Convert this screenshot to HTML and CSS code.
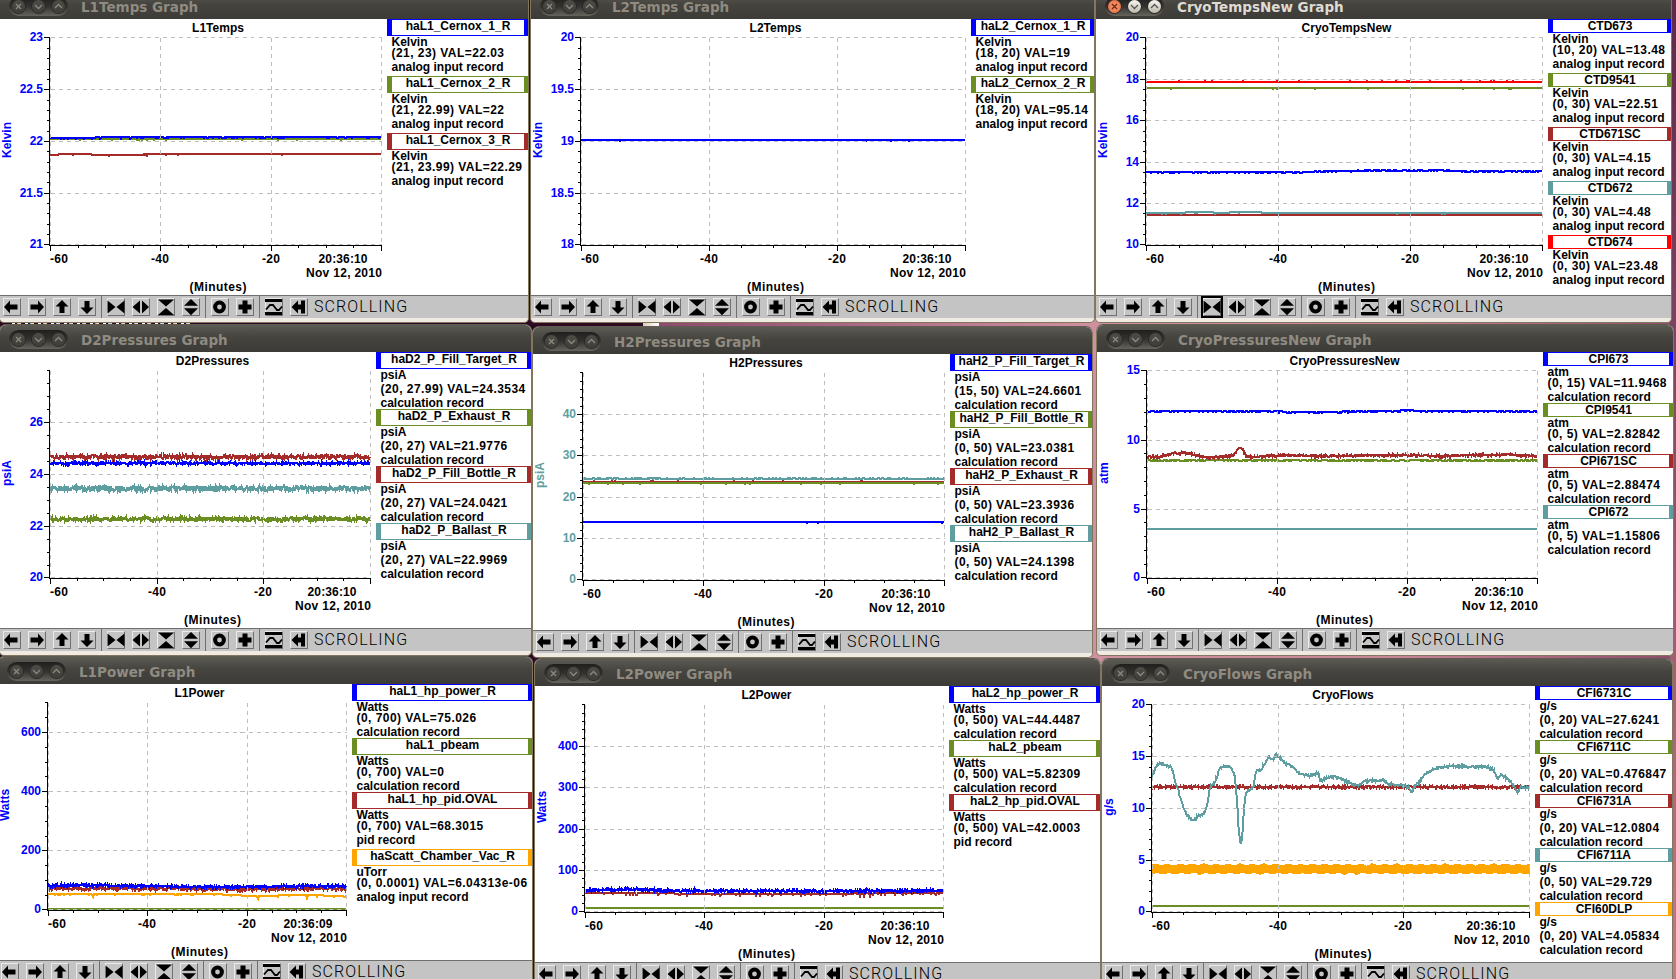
FILE: index.html
```html
<!DOCTYPE html>
<html lang="en">
<head>
  <meta charset="UTF-8" />
  <title>Strip Charts</title>
  <link rel="stylesheet" href="styles.css">
</head>
<body>

  <svg class="sprite" aria-hidden="true">
    <symbol id="left" viewBox="0 0 18 18"><path d="M1 9l6-6.5V6.5h7.5v5H7v4z"/></symbol>
    <symbol id="right" viewBox="0 0 18 18"><path d="M16 9l-6-6.5V6.5H2.5v5H10v4z"/></symbol>
    <symbol id="up" viewBox="0 0 18 18"><path d="M9 2L2.500 8.500H6.500V15h5V8.500h4z"/></symbol>
    <symbol id="down" viewBox="0 0 18 18"><path d="M9 16L2.500 9.500H6.500V3h5v6.500h4z"/></symbol>
    <symbol id="xin" viewBox="0 0 18 18"><path d="M0.500 2.500L8.500 9l-8 6.500zM17.500 2.500L9.500 9l8 6.500z"/></symbol>
    <symbol id="xout" viewBox="0 0 18 18"><path d="M8 2.500L0.500 9 8 15.500zM10 2.500L17 9l-7 6.500z"/></symbol>
    <symbol id="yin" viewBox="0 0 18 18"><path d="M1 1.500h16L9 8.500zM1 17h16L9 10z"/></symbol>
    <symbol id="yout" viewBox="0 0 18 18"><path d="M9 1L2 7.800h14zM9 17.200L2 10.200h14z"/></symbol>
    <symbol id="ring" viewBox="0 0 18 18"><circle cx="8.500" cy="9" r="4.400" fill="none" stroke="#000" stroke-width="4"/></symbol>
    <symbol id="plus" viewBox="0 0 18 18"><path d="M6.500 2.500h5V6.500h4v5h-4v4h-5v-4h-4v-5h4z"/></symbol>
    <symbol id="wave" viewBox="0 0 18 18"><path d="M0 1h17v3H0zM0 14h17v3H0z"/><path d="M1 11.500L5 7h3l4 5h2l3-3.500" fill="none" stroke="#000" stroke-width="1.800"/></symbol>
    <symbol id="reset" viewBox="0 0 18 18"><path d="M1.500 9L8 2.500V6.500h3v-4h4v13h-4v-4H8v4z"/></symbol>
  </svg>

  <main class="desktop" id="desktop">
    <div class="terminal-text"></div>
    <div class="panel-edge"></div>
  </main>

  <script src="charts.js"></script>
</body>
</html>
```
FILE: styles.css
```css
body {
  margin: 0;
  overflow: hidden;
  font-family: "Liberation Sans", Arial, sans-serif;
  font-size: 12px;
}

.sprite {
  display: none;
}

.desktop {
  position: relative;
  width: 1676px;
  height: 979px;
  overflow: hidden;
  background:
    linear-gradient(#5c2a4c, #7d4562 35%, #c27a86) 1670px 0 / 6px 100% no-repeat,
    linear-gradient(90deg, #2c0a22 643px, #8c4a6e 660px, #cf90a0 1096px, #c98596 1400px, #8e4c6c);
}

/* strips of the windows that lie behind */
.terminal-text {
  position: absolute;
  left: 12px;
  top: 323px;
  width: 180px;
  height: 2px;
  background: repeating-linear-gradient(90deg, #fff 0 3px, #2c0a22 3px 5px, #7fb4e8 5px 6px, #e8dcc0 6px 9px, #2c0a22 9px 13px);
}

.panel-edge {
  position: absolute;
  left: 643px;
  top: 323px;
  width: 16px;
  height: 4px;
  background: linear-gradient(90deg, #d8cfb8, #fff);
}

/* windows */
.window {
  position: absolute;
  box-sizing: content-box;
  border: 1px solid #82765f;
  border-top-color: #5f5b50;
  border-radius: 7px 7px 5px 5px;
  background: #efebe2;
  overflow: hidden;
  padding-bottom: 4px;
}

.l1temps { left: -1px; top: -9px; width: 528px; }
.l2temps { left: 530px; top: -9px; width: 563px; }
.cryotemps { left: 1095px; top: -9px; width: 575px; }
.d2pressures { left: -1px; top: 324px; width: 531px; }
.h2pressures { left: 532px; top: 326px; width: 559px; }
.cryopressures { left: 1096px; top: 324px; width: 576px; }
.l1power { left: -3px; top: 656px; width: 534px; }
.l2power { left: 534px; top: 658px; width: 565px; }
.cryoflows { left: 1101px; top: 658px; width: 570px; }

.titlebar {
  display: flex;
  align-items: center;
  box-sizing: border-box;
  height: 27px;
  padding-top: 2px;
  background: linear-gradient(#5b5a53, #45443f 45%, #3c3b37);
  color: #8f8b81;
  font: bold 13.5px "DejaVu Sans", sans-serif;
  line-height: 16px;
  white-space: nowrap;
}

.controls {
  display: flex;
  align-items: center;
  justify-content: space-between;
  box-sizing: border-box;
  width: 59px;
  height: 19px;
  margin: 0 13px 0 9px;
  padding: 0 3px;
  border-radius: 10px;
  background: linear-gradient(#201f1d, #343330 50%, #65645c);
}

.control {
  width: 13px;
  height: 13px;
  border-radius: 50%;
  background: linear-gradient(#4d4c47, #3e3d39);
  box-shadow: 0 0 0 1px #2b2a27;
}

.control path {
  fill: none;
  stroke: #8d897e;
  stroke-width: 1.3;
}

.active .titlebar {
  color: #dfdbd2;
}

.active .control {
  background: linear-gradient(#f7f5f0, #bdb8ad);
}

.active .control path {
  stroke: #55534c;
}

.active .close {
  background: radial-gradient(#f79a72, #e9683c);
}

.active .close path {
  stroke: #6b2a12;
}

.content {
  display: flex;
  height: 276px;
  background: #fff;
}

/* plot */
.plot {
  display: block;
  flex: none;
  font-weight: bold;
}

.grid {
  stroke: #bebebe;
  stroke-dasharray: 4 4;
}

.axis {
  stroke: #000;
}

.trace {
  fill: none;
  stroke-width: 2;
}

.grid, .axis, .trace {
  shape-rendering: crispEdges;
}

/* legend */
.legend {
  flex: none;
  color: #000;
  font-weight: bold;
  white-space: nowrap;
  overflow: hidden;
}

.legend div {
  box-sizing: border-box;
  height: 14px;
  line-height: 14px;
  padding-left: 4.5px;
}

.legend .name {
  border: solid;
  border-width: 1px 4px 1px 5px;
  padding: 0;
  height: 14px;
  line-height: 12px;
  text-align: center;
}

.legend .name span {
  color: #000;
}

.legend .name.deep {
  height: 17px;
}

.legend .units {
  height: 11px;
  line-height: 13px;
}

.legend .units.deep {
  height: 14px;
}

.legend .value {
  letter-spacing: 0.45px;
  line-height: 12px;
}

.legend .record {
  height: 12px;
  line-height: 12px;
}

.legend .record.deep {
  height: 15px;
}

/* toolbar */
.toolbar {
  display: flex;
  align-items: center;
  box-sizing: border-box;
  height: 23px;
  border-top: 1px solid #6f6f6f;
  background: #c4c4c4;
  white-space: nowrap;
}

.group {
  display: flex;
  align-items: center;
  gap: 7px;
  height: 22px;
  padding: 0 5px 0 5px;
  border-right: 1px solid #6f6f6f;
}

.group:first-child {
  padding-left: 3px;
}

.group:last-of-type {
  border-right: none;
}

.tool {
  box-sizing: border-box;
  width: 18px;
  height: 18px;
  border: 1px solid;
  border-color: #ebebeb #707070 #707070 #ebebeb;
}

.tool svg {
  display: block;
  width: 18px;
  height: 18px;
  margin: -1px;
}

.tool.focused {
  outline: 2px solid #000;
}

.status {
  margin-left: 1px;
  font-family: Roboto, "Liberation Sans", sans-serif;
  font-weight: 300;
  font-size: 16px;
  letter-spacing: 1.1px;
  line-height: 20px;
}
```
FILE: charts.js
```js
const BLUE = '#0000ff', GREEN = '#6b8e23', BROWN = '#a52a2a', TEAL = '#5f9ea0', ORANGE = '#ffa500', RED = '#ff0000';
const AI = 'analog input record', CALC = 'calculation record';

// signals: [name, units, range, value, record type, colour]
// traces: [colour, points [percent, y], noise up, noise down, how often, spikes]
const charts = [
  { id: 'l1temps', title: 'L1Temps', legend: 141, w: 528, min: 21, max: 23, major: 0.5, minor: 0.1, units: 'Kelvin', time: '20:36:10',
    signals: [
      ['haL1_Cernox_1_R', 'Kelvin', '(21, 23)', '22.03', AI, BLUE],
      ['haL1_Cernox_2_R', 'Kelvin', '(21, 22.99)', '22', AI, GREEN],
      ['haL1_Cernox_3_R', 'Kelvin', '(21, 23.99)', '22.29', AI, BROWN]],
    traces: [[GREEN, [[0, 120]], 0, 1, 0.05], [BLUE, [[0, 119], [12, 119], [14, 118.400], [50, 118]], 0, 1, 0.2], [BROWN, [[0, 136], [5, 135], [20, 136], [30, 135.400], [45, 135]], 0, 1, 0.04]] },
  { id: 'l2temps', title: 'L2Temps', legend: 123, w: 563, min: 18, max: 20, major: 0.5, minor: 0.1, units: 'Kelvin', time: '20:36:10',
    signals: [
      ['haL2_Cernox_1_R', 'Kelvin', '(18, 20)', '19', AI, BLUE],
      ['haL2_Cernox_2_R', 'Kelvin', '(18, 20)', '95.14', AI, GREEN]],
    traces: [[BLUE, [[0, 121]], 0, 1, 0.01]] },
  { id: 'cryotemps', title: 'CryoTempsNew', legend: 123, w: 575, min: 10, max: 20, major: 2, minor: 0.5, units: 'Kelvin', time: '20:36:10', active: true,
    signals: [
      ['CTD673', 'Kelvin', '(10, 20)', '13.48', AI, BLUE],
      ['CTD9541', 'Kelvin', '(0, 30)', '22.51', AI, GREEN],
      ['CTD671SC', 'Kelvin', '(0, 30)', '4.15', AI, BROWN],
      ['CTD672', 'Kelvin', '(0, 30)', '4.48', AI, TEAL],
      ['CTD674', 'Kelvin', '(0, 30)', '23.48', AI, RED]],
    traces: [
      [BLUE, [[0, 152.700], [38, 153], [50, 151.600], [60, 151.300], [75, 151.300], [84, 152.400]], 0, 0.700, 0.5],
      [GREEN, [[0, 69]], 0, 1, 0.03],
      [BROWN, [[0, 196]], 0, 0, 0],
      [TEAL, [[0, 194], [10, 194], [10.100, 193], [17, 193], [17.100, 194], [25, 193], [29, 193], [29.100, 194]], 0, 1, 0.03],
      [RED, [[0, 63]], 1, 0, 0.04]] },
  { id: 'd2pressures', title: 'D2Pressures', legend: 155, w: 531, min: 20, max: 28, major: 2, minor: 0.5, openTop: true, units: 'psiA', time: '20:36:10',
    signals: [
      ['haD2_P_Fill_Target_R', 'psiA', '(20, 27.99)', '24.3534', CALC, BLUE],
      ['haD2_P_Exhaust_R', 'psiA', '(20, 27)', '21.9776', CALC, GREEN],
      ['haD2_P_Fill_Bottle_R', 'psiA', '(20, 27)', '24.0421', CALC, BROWN],
      ['haD2_P_Ballast_R', 'psiA', '(20, 27)', '22.9969', CALC, TEAL]],
    traces: [[BLUE, [[0, 111.400]], 1, 1, 0.7], [GREEN, [[0, 167]], 2, 2, 0.9], [BROWN, [[0, 105]], 2, 2, 0.95], [TEAL, [[0, 136.500]], 2.600, 2.600, 0.95]] },
  { id: 'h2pressures', title: 'H2Pressures', legend: 142, w: 559, min: 0, max: 50, major: 10, minor: 2, openTop: true, units: 'psiA', axisColor: TEAL, time: '20:36:10',
    signals: [
      ['haH2_P_Fill_Target_R', 'psiA', '(15, 50)', '24.6601', CALC, BLUE],
      ['haH2_P_Fill_Bottle_R', 'psiA', '(0, 50)', '23.0381', CALC, GREEN],
      ['haH2_P_Exhaust_R', 'psiA', '(0, 50)', '23.3936', CALC, BROWN],
      ['haH2_P_Ballast_R', 'psiA', '(0, 50)', '24.1398', CALC, TEAL]],
    traces: [[BLUE, [[0, 168]], 0, 1, 0.02], [BROWN, [[0, 128]], 1, 0, 0.04], [GREEN, [[0, 129]], 0, 1, 0.05], [TEAL, [[0, 125]], 1, 0, 0.3]] },
  { id: 'cryopressures', title: 'CryoPressuresNew', legend: 130, w: 576, min: 0, max: 15, major: 5, minor: 1, units: 'atm', time: '20:36:10',
    signals: [
      ['CPI673', 'atm', '(0, 15)', '11.9468', CALC, BLUE],
      ['CPI9541', 'atm', '(0, 5)', '2.82842', CALC, GREEN],
      ['CPI671SC', 'atm', '(0, 5)', '2.88474', CALC, BROWN],
      ['CPI672', 'atm', '(0, 5)', '1.15806', CALC, TEAL]],
    traces: [
      [BLUE, [[0, 59], [30, 59], [40, 60], [60, 59], [66, 58.400], [80, 59]], 0, 1, 0.4],
      [GREEN, [[0, 108]], 0, 1, 0.5],
      [BROWN, [[0, 104.600], [3, 105.300], [7, 101], [10, 101], [16, 105.600], [22, 104], [23.500, 96], [24.500, 97], [25.500, 105], [32, 104], [36, 103.400], [45, 104], [70, 103], [74, 104], [94, 102.600], [100, 104.600]], 0.700, 0.700, 0.7],
      [TEAL, [[0, 177]], 0, 0, 0]] },
  { id: 'l1power', title: 'L1Power', legend: 180, w: 534, min: 0, max: 700, major: 200, minor: 50, openTop: true, units: 'Watts', time: '20:36:09',
    signals: [
      ['haL1_hp_power_R', 'Watts', '(0, 700)', '75.026', CALC, BLUE],
      ['haL1_pbeam', 'Watts', '(0, 700)', '0', CALC, GREEN],
      ['haL1_hp_pid.OVAL', 'Watts', '(0, 700)', '68.3015', 'pid record', BROWN],
      ['haScatt_Chamber_Vac_R', 'uTorr', '(0, 0.0001)', '6.04313e-06', AI, ORANGE]],
    traces: [
      [GREEN, [[0, 225]], 0, 0, 0],
      [ORANGE, [[0, 210], [57, 210], [60, 211], [70, 212], [85, 211], [100, 212]], 0, 1, 0.15, [15, 70.600, 87]],
      [BROWN, [[0, 204], [25, 204], [65, 205], [100, 204]], 1, 2, 0.6],
      [BLUE, [[0, 202], [10, 201], [50, 203], [100, 202]], 1, 1, 0.7]] },
  { id: 'l2power', title: 'L2Power', legend: 151, w: 565, min: 0, max: 500, major: 100, minor: 20, openTop: true, units: 'Watts', time: '20:36:10',
    signals: [
      ['haL2_hp_power_R', 'Watts', '(0, 500)', '44.4487', CALC, BLUE],
      ['haL2_pbeam', 'Watts', '(0, 500)', '5.82309', CALC, GREEN],
      ['haL2_hp_pid.OVAL', 'Watts', '(0, 500)', '42.0003', 'pid record', BROWN]],
    traces: [[GREEN, [[0, 222]], 0, 0, 0], [BROWN, [[0, 207], [50, 208], [100, 207]], 0, 2, 0.15], [BLUE, [[0, 204.600], [13, 203.600], [25, 205], [50, 205.400], [100, 205]], 1.500, 1, 0.6]] },
  { id: 'cryoflows', title: 'CryoFlows', legend: 137, w: 570, min: 0, max: 20, major: 5, minor: 1, units: 'g/s', time: '20:36:10',
    signals: [
      ['CFI6731C', 'g/s', '(0, 20)', '27.6241', CALC, BLUE],
      ['CFI6711C', 'g/s', '(0, 20)', '0.476847', CALC, GREEN],
      ['CFI6731A', 'g/s', '(0, 20)', '12.0804', CALC, BROWN],
      ['CFI6711A', 'g/s', '(0, 50)', '29.729', CALC, TEAL],
      ['CFI60DLP', 'g/s', '(0, 20)', '4.05834', CALC, ORANGE]],
    traces: [
      [GREEN, [[0, 220]], 0, 0, 0],
      [BROWN, [[0, 101]], 1, 1, 0.7],
      [TEAL, [[0, 90], [1.100, 81], [2.100, 77], [3.100, 79], [4.500, 80], [5.400, 83], [6.300, 98], [7, 104], [7.800, 116], [9, 127], [10, 133], [11.300, 134], [12.400, 130], [13.400, 129], [14.500, 122], [15.400, 101], [16.700, 96], [18, 83], [19, 80], [20, 81], [21, 81], [22, 91], [22.600, 117], [23, 144], [23.500, 158], [23.900, 154], [24.400, 121], [24.900, 107], [25.900, 104], [26.900, 101], [27.700, 84], [28.600, 85], [29.900, 78], [31, 71], [32, 74], [32.800, 69], [34, 72], [35.500, 77], [37, 80], [39, 87], [40.500, 89], [42, 90], [43.700, 87], [44.300, 88], [44.700, 96], [45.700, 93], [47, 92], [48.400, 90], [50, 92], [51.400, 95], [53, 98], [55, 99], [56.300, 95], [58, 94], [59.300, 95], [61.300, 94], [62.800, 98], [65, 99], [66.800, 99], [68, 101], [69, 107], [69.500, 100], [70.700, 97], [72.200, 89], [73.700, 85], [75.700, 82], [77.700, 81], [81, 80], [83.600, 81], [86.600, 81], [89, 81], [90.800, 85], [91.600, 93], [92.600, 88], [94.500, 93], [96, 100], [97, 108], [97.700, 101], [100, 102]], 1, 1, 0.6],
      [ORANGE, [[0, 183]], 5, 5, 1]] }
];

// small repeatable generator so the noise looks the same on every load
let seed = 20361;
function random() {
  seed = (seed * 16807) % 2147483647;
  return seed / 2147483647;
}

function valueAt(points, p) {
  for (let i = 1; i < points.length; i++) {
    if (p <= points[i][0]) {
      const [x0, y0] = points[i - 1], [x1, y1] = points[i];
      return y0 + (y1 - y0) * (p - x0) / (x1 - x0);
    }
  }
  return points[points.length - 1][1];
}

function tracePath(trace, x0, x1) {
  const [, points, up, down, rate, spikes] = trace;
  const step = rate >= 0.6 ? 0.5 : 1;
  const flat = [];
  for (let x = x0; x <= x1; x += step) {
    const p = (x - x0) / (x1 - x0) * 100;
    let y = valueAt(points, p);
    if (rate === 1) {
      // sensor flips between both rails at each sample, the rails beat slowly
      const side = flat.length % 2 ? 1 : -1;
      y += side * (4.1 + Math.sin(x * 0.52 + side) * 0.8 + random() * 0.7);
    } else if (random() < rate) {
      y += random() < up / (up + down) ? -random() * up - 0.3 : random() * down + 0.3;
    }
    if (spikes && spikes.some(s => Math.abs(s - p) < 0.2)) y += 3;
    flat.push(x + ',' + Math.round(y));
  }
  return 'M' + flat.join('L');
}

function line(x1, y1, x2, y2) {
  return `M${x1} ${y1}L${x2} ${y2}`;
}

function text(x, y, str, anchor, width, color) {
  const fit = width ? ` textLength="${width}"` : '';
  return `<text x="${x}" y="${y}" text-anchor="${anchor}"${fit} fill="${color || '#000'}">${str}</text>`;
}

function plot(c) {
  const w = c.w - c.legend;
  const x0 = 50.5, x1 = w - 5.5, top = 18.5, bottom = 225.5;
  const color = c.axisColor || BLUE;
  const yOf = v => Math.round(bottom - (v - c.min) / (c.max - c.min) * (bottom - top)) + 0.5 - (v === c.min ? 1 : 0);
  const xOf = m => Math.round(x0 + m / 60 * (x1 - x0) - 0.5) + 0.5;
  let grid = '', axis = line(49.5, 18, 49.5, 227) + line(49, 226.5, w - 5, 226.5), labels = '';

  const steps = Math.round((c.max - c.min) / c.minor);
  const perMajor = Math.round(c.major / c.minor);
  for (let i = 0; i <= steps; i++) {
    const v = c.min + i * c.minor, y = yOf(v) - (i === steps ? 1 : 0);
    if (i % perMajor === 0 && !(c.openTop && i === steps)) {
      grid += line(x0, y, x1, y);
      axis += line(44, y, 49, y);
      labels += text(43, y + 3.5, +v.toFixed(1), 'end', 0, color);
    } else {
      axis += line(47, y, 49, y);
    }
  }
  for (let m = 0; m <= 60; m += 5) {
    const x = xOf(m);
    axis += line(x, 227, x, m % 20 ? 229 : 232);
    if (m % 20 === 0) grid += line(x, top, x, 226);
  }

  const mid = (x0 + x1) / 2 + 2;
  labels += text(mid, 13, c.title, 'middle');
  labels += text(x0 - 0.5, 244, '-60', 'start', 18);
  labels += text(xOf(20) - 0.5, 244, '-40', 'middle', 18);
  labels += text(xOf(40) - 0.5, 244, '-20', 'middle', 18);
  labels += text(x1 - 14, 244, c.time, 'end', 49);
  labels += text(x1 + 0.5, 258, 'Nov 12, 2010', 'end', 76);
  labels += text(mid, 272, '(Minutes)', 'middle', 57);
  labels += `<text transform="translate(11 121) rotate(-90)" text-anchor="middle" fill="${color}">${c.units}</text>`;

  const traces = c.traces.map(t => `<path class="trace" stroke="${t[0]}" d="${tracePath(t, 50, w - 6)}"/>`).join('');
  return `<svg class="plot" width="${w}" height="276">${traces}<path class="grid" d="${grid}"/><path class="axis" d="${axis}"/>${labels}</svg>`;
}

// lines with descenders take more room in the legend
function deep(str) {
  return /[gpy_]/.test(str) ? ' deep' : '';
}

function legend(c) {
  const rows = c.signals.map(([name, units, range, value, record, color]) => `
    <div class="name${deep(name)}" style="border-color:${color}"><span>${name}</span></div>
    <div class="units${deep(units)}">${units}</div>
    <div class="value">${range} VAL=${value}</div>
    <div class="record${deep(record)}">${record}</div>`).join('');
  return `<div class="legend" style="width:${c.legend}px">${rows}</div>`;
}

function toolbar(c) {
  const groups = [['left', 'right', 'up', 'down'], ['xin', 'xout', 'yin', 'yout'], ['ring', 'plus'], ['wave', 'reset']];
  return groups.map(g => '<div class="group">' + g.map(name =>
    `<div class="tool${c.active && name === 'xin' ? ' focused' : ''}"><svg><use href="#${name}"/></svg></div>`).join('') + '</div>').join('') +
    '<span class="status">SCROLLING</span>';
}

function control(cls, d) {
  return `<svg class="control ${cls}" viewBox="0 0 13 13"><path d="${d}"/></svg>`;
}

const desktop = document.getElementById('desktop');
charts.forEach(c => {
  const el = document.createElement('section');
  el.className = 'window ' + c.id + (c.active ? ' active' : '');
  el.innerHTML = `
    <div class="titlebar">
      <div class="controls">
        ${control('close', 'M4 4l5 5M9 4l-5 5')}
        ${control('', 'M3 5l3.500 3.500L10 5')}
        ${control('', 'M3 8l3.500-3.500L10 8')}
      </div>
      ${c.title} Graph
    </div>
    <div class="content">${plot(c)}${legend(c)}</div>
    <div class="toolbar">${toolbar(c)}</div>`;
  desktop.appendChild(el);
});
```
